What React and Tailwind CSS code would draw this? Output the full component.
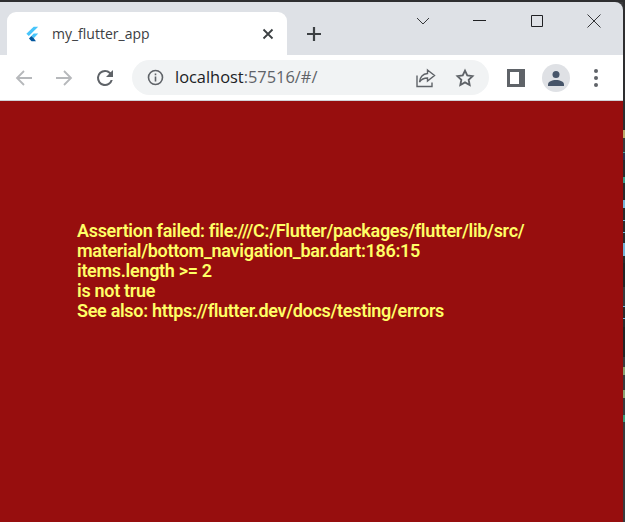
import React from "react";

const NavArrow = ({ flip, color }) => (
  <svg width="20" height="20" viewBox="0 0 20 20" fill="none" stroke={color} strokeWidth="1.8" className={flip ? "-scale-x-100" : ""}>
    <path d="M18 10H3M10 3l-7 7 7 7" />
  </svg>
);

const edgeMarks = [
  ["h-[75px]", "bg-[#2e2e30]"],
  ["h-[8px]", "bg-[#b9a867]"],
  ["h-[14px]", "bg-[#3a3a3d]"],
  ["h-[1px]", "bg-[#4f9c96]"],
  ["h-[7px]", "bg-[#2f3350]"],
  ["h-[17px]", "bg-[#2b2b2d]"],
  ["h-[6px]", "bg-[#3c9c8c]"],
  ["h-[17px]", "bg-[#2b2b2d]"],
  ["h-[8px]", "bg-[#74b4d8]"],
  ["h-[12px]", "bg-[#2b2b2d]"],
  ["h-[1px]", "bg-[#74b4d8]"],
  ["h-[11px]", "bg-[#2b2b2d]"],
  ["h-[1px]", "bg-[#74b4d8]"],
  ["h-[10px]", "bg-[#2b2b2d]"],
  ["h-[13px]", "bg-[#74b4d8]"],
  ["h-[7px]", "bg-[#2b2b2d]"],
  ["h-[24px]", "bg-[#242426]"],
  ["h-[19px]", "bg-[#3a3a3d]"],
  ["h-[1px]", "bg-[#74b4d8]"],
  ["h-[11px]", "bg-[#2b2b2d]"],
  ["h-[1px]", "bg-[#74b4d8]"],
  ["h-[8px]", "bg-[#2b2b2d]"],
  ["h-[30px]", "bg-[#242426]"],
  ["h-[10px]", "bg-[#3a3a3d]"],
  ["h-[8px]", "bg-[#8aa070]"],
  ["h-[15px]", "bg-[#3a3a3d]"],
  ["h-[8px]", "bg-[#8aa070]"],
  ["h-[17px]", "bg-[#3a3a3d]"],
  ["h-[7px]", "bg-[#3c9c7c]"],
];

export default function App() {
  return (
    <div className="w-[625px] h-[522px] flex flex-col overflow-hidden bg-[#3a3a3d] font-['Roboto',sans-serif]">
      <div className="h-[2px] bg-[#2e2e30] shrink-0" />
      <div className="flex flex-1 min-h-0">
        <div className="flex-1 flex flex-col min-w-0">
          {/* tab strip */}
          <div className="h-[53px] shrink-0 bg-[#dee1e6] rounded-tr-[8px] flex items-end pl-[7px]">
            <div className="w-[280px] h-[43px] bg-white rounded-t-[9px] flex items-center pl-[16px] pr-[13px]">
              <svg width="18" height="18" viewBox="0 0 16 16" className="shrink-0">
                <path d="M9.500 1.500H13.500L5.200 9.800 3 7.700z" fill="#47c5fb" />
                <path d="M9.500 7.500H13.500L9.600 11.700 7.400 9.700z" fill="#47c5fb" />
                <path d="M7.400 9.700l2.200 2 1.900 2.800H7.600L5.300 12z" fill="#00569e" />
              </svg>
              <span className="ml-[11px] flex-1 text-[14px] text-[#3c4043] font-['Open_Sans',sans-serif] leading-none">my_flutter_app</span>
              <svg width="12" height="12" viewBox="0 0 12 12" stroke="#3c4043" strokeWidth="1.8" className="shrink-0">
                <path d="M1.500 1.500l9 9M10.500 1.500l-9 9" />
              </svg>
            </div>
            <div className="h-[43px] flex items-center ml-[19px]">
              <svg width="16" height="16" viewBox="0 0 16 16" stroke="#3c4043" strokeWidth="2.2">
                <path d="M8 1v14M1 8h14" />
              </svg>
            </div>
            <div className="h-[53px] ml-auto flex items-start pt-[12px] pr-[22px] gap-[43px]">
              <svg width="14" height="14" viewBox="0 0 14 14" fill="none" stroke="#202124" strokeWidth="0.9">
                <path d="M1 4l6 6 6-6" />
              </svg>
              <svg width="14" height="14" viewBox="0 0 14 14" fill="none" stroke="#202124" strokeWidth="1">
                <path d="M0 6.500h13" />
              </svg>
              <svg width="14" height="14" viewBox="0 0 14 14" fill="none" stroke="#202124" strokeWidth="1">
                <path d="M1.500 1.500h11v11h-11z" />
              </svg>
              <svg width="14" height="14" viewBox="0 0 14 14" fill="none" stroke="#202124" strokeWidth="0.9">
                <path d="M.5.5l13 13M13.500.5l-13 13" />
              </svg>
            </div>
          </div>

          {/* toolbar */}
          <div className="h-[45px] shrink-0 bg-white border-b border-[#d0d2d6] box-content flex items-center pl-[14px]">
            <NavArrow color="#b6b8bb" />
            <div className="ml-[20px]"><NavArrow flip color="#b6b8bb" /></div>
            <svg width="24" height="24" viewBox="0 0 24 24" fill="#5f6368" className="ml-[19px] shrink-0">
              <path d="M17.650 6.350A7.960 7.960 0 0 0 12 4a8 8 0 1 0 7.730 10h-2.080A6 6 0 1 1 12 6c1.660 0 3.140.69 4.220 1.780L13 11h7V4z" />
            </svg>
            <div className="ml-[15px] w-[357px] h-[35px] rounded-full bg-[#f1f3f4] flex items-center pl-[15px] pr-[14px] shrink-0">
              <svg width="17" height="17" viewBox="0 0 17 17" fill="none" stroke="#5f6368" strokeWidth="1.6" className="shrink-0">
                <circle cx="8.500" cy="8.500" r="7" />
                <path d="M8.500 7.500v5M8.500 4.400v1.800" />
              </svg>
              <span className="ml-[11px] flex-1 text-[16.400px] leading-none font-['Open_Sans',sans-serif] text-[#202124]">
                localhost<span className="text-[#5f6368]">:57516/#/</span>
              </span>
              <svg width="20" height="20" viewBox="0 0 20 20" fill="none" stroke="#5f6368" strokeWidth="1.400" className="shrink-0">
                <path d="M1 7.500v11h15v-4" />
                <path d="M11.500 2l7 5.500-7 5.500V10C8 10 5.500 11 3.500 14c.5-4.500 3-8 8-8.500z" />
              </svg>
              <svg width="20" height="20" viewBox="0 0 24 24" fill="none" stroke="#5f6368" strokeWidth="2.200" className="ml-[19px] shrink-0">
                <path d="M12 3.200l2.700 5.800 6.300.8-4.600 4.300 1.200 6.300L12 17.300l-5.600 3.100 1.200-6.300L3 9.800l6.300-.8z" />
              </svg>
            </div>
            <div className="ml-[18px] w-[18px] h-[18px] bg-[#5f6368] flex items-center pl-[3px] shrink-0">
              <div className="w-[9px] h-[12px] bg-white" />
            </div>
            <div className="ml-[17px] w-[28px] h-[28px] rounded-full bg-[#dfe1e5] flex items-center justify-center shrink-0">
              <svg width="16" height="16" viewBox="0 0 16 16" fill="#475569">
                <circle cx="8" cy="4.500" r="3.500" />
                <path d="M0 16v-1.500C0 11.500 4 10 8 10s8 1.500 8 4.500V16z" />
              </svg>
            </div>
            <div className="ml-[24px] flex flex-col gap-[3px] shrink-0">
              <div className="w-[4px] h-[4px] rounded-full bg-[#5f6368]" />
              <div className="w-[4px] h-[4px] rounded-full bg-[#5f6368]" />
              <div className="w-[4px] h-[4px] rounded-full bg-[#5f6368]" />
            </div>
          </div>

          {/* flutter error page */}
          <div className="flex-1 bg-[#970e0e] pl-[77px] pt-[120px] pr-[90px]">
            <p className="text-[18px] leading-[20px] font-semibold text-[#ffff66] tracking-[-0.3px] whitespace-nowrap">
              Assertion failed: file:///C:/Flutter/packages/flutter/lib/src/
              <br />
              material/bottom_navigation_bar.dart:186:15
              <br />
              items.length &gt;= 2
              <br />
              is not true
              <br />
              See also: https://flutter.dev/docs/testing/errors
            </p>
          </div>
        </div>

        {/* sliver of the window behind */}
        <div className="w-[2px] shrink-0 flex flex-col">
          <div className="h-[53px] shrink-0 bg-[#2e2e30]" />
          {edgeMarks.map(([height, color], i) => (
            <div key={i} className={`${height} ${color} shrink-0`} />
          ))}
        </div>
      </div>
    </div>
  );
}
